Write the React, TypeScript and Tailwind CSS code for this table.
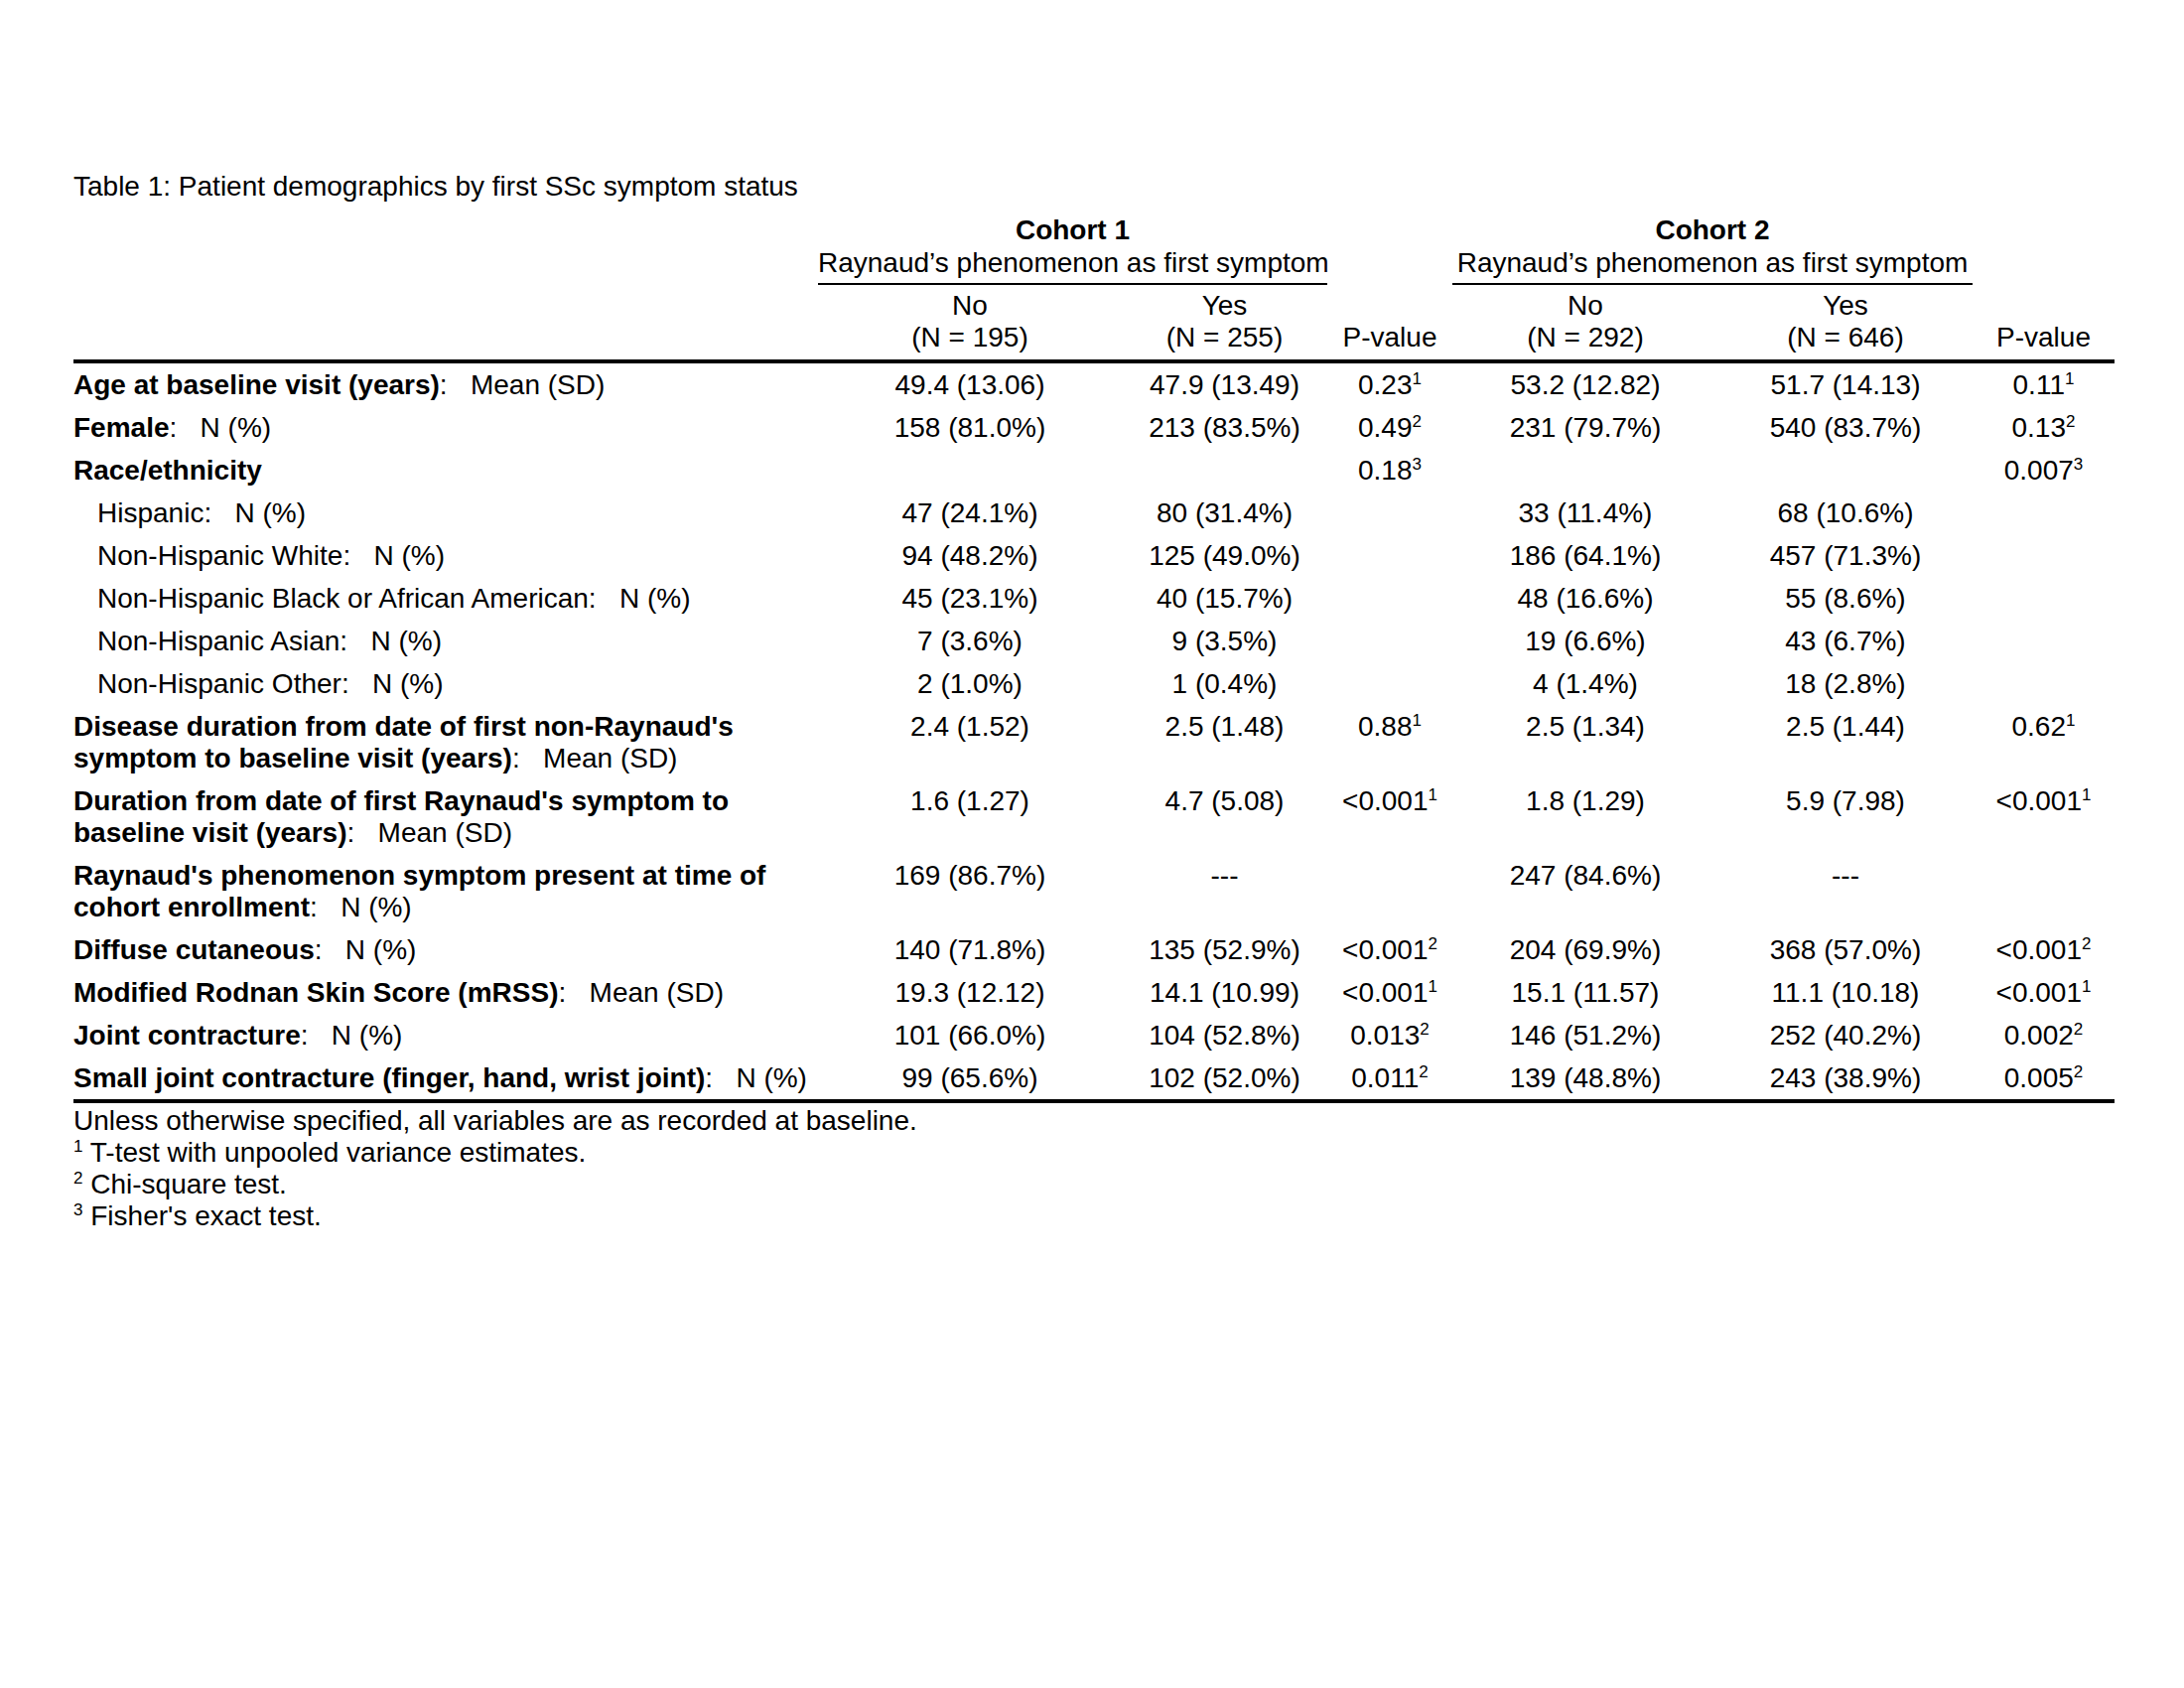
import React from "react";

type Cell = string | [string, string];
type Row = {
  bold?: string;
  bold2?: string;
  rest?: string;
  indent?: boolean;
  v: Cell[];
};

const rows: Row[] = [
  { bold: "Age at baseline visit (years)", rest: ":   Mean (SD)", v: ["49.4 (13.06)", "47.9 (13.49)", ["0.23", "1"], "53.2 (12.82)", "51.7 (14.13)", ["0.11", "1"]] },
  { bold: "Female", rest: ":   N (%)", v: ["158 (81.0%)", "213 (83.5%)", ["0.49", "2"], "231 (79.7%)", "540 (83.7%)", ["0.13", "2"]] },
  { bold: "Race/ethnicity", rest: "", v: ["", "", ["0.18", "3"], "", "", ["0.007", "3"]] },
  { indent: true, rest: "Hispanic:   N (%)", v: ["47 (24.1%)", "80 (31.4%)", "", "33 (11.4%)", "68 (10.6%)", ""] },
  { indent: true, rest: "Non-Hispanic White:   N (%)", v: ["94 (48.2%)", "125 (49.0%)", "", "186 (64.1%)", "457 (71.3%)", ""] },
  { indent: true, rest: "Non-Hispanic Black or African American:   N (%)", v: ["45 (23.1%)", "40 (15.7%)", "", "48 (16.6%)", "55 (8.6%)", ""] },
  { indent: true, rest: "Non-Hispanic Asian:   N (%)", v: ["7 (3.6%)", "9 (3.5%)", "", "19 (6.6%)", "43 (6.7%)", ""] },
  { indent: true, rest: "Non-Hispanic Other:   N (%)", v: ["2 (1.0%)", "1 (0.4%)", "", "4 (1.4%)", "18 (2.8%)", ""] },
  { bold: "Disease duration from date of first non-Raynaud's", bold2: "symptom to baseline visit (years)", rest: ":   Mean (SD)", v: ["2.4 (1.52)", "2.5 (1.48)", ["0.88", "1"], "2.5 (1.34)", "2.5 (1.44)", ["0.62", "1"]] },
  { bold: "Duration from date of first Raynaud's symptom to", bold2: "baseline visit (years)", rest: ":   Mean (SD)", v: ["1.6 (1.27)", "4.7 (5.08)", ["<0.001", "1"], "1.8 (1.29)", "5.9 (7.98)", ["<0.001", "1"]] },
  { bold: "Raynaud's phenomenon symptom present at time of", bold2: "cohort enrollment", rest: ":   N (%)", v: ["169 (86.7%)", "---", "", "247 (84.6%)", "---", ""] },
  { bold: "Diffuse cutaneous", rest: ":   N (%)", v: ["140 (71.8%)", "135 (52.9%)", ["<0.001", "2"], "204 (69.9%)", "368 (57.0%)", ["<0.001", "2"]] },
  { bold: "Modified Rodnan Skin Score (mRSS)", rest: ":   Mean (SD)", v: ["19.3 (12.12)", "14.1 (10.99)", ["<0.001", "1"], "15.1 (11.57)", "11.1 (10.18)", ["<0.001", "1"]] },
  { bold: "Joint contracture", rest: ":   N (%)", v: ["101 (66.0%)", "104 (52.8%)", ["0.013", "2"], "146 (51.2%)", "252 (40.2%)", ["0.002", "2"]] },
  { bold: "Small joint contracture (finger, hand, wrist joint)", rest: ":   N (%)", v: ["99 (65.6%)", "102 (52.0%)", ["0.011", "2"], "139 (48.8%)", "243 (38.9%)", ["0.005", "2"]] },
];

const GRID = "grid grid-cols-[750px_306px_207px_126px_268px_256px_143px]";

function Sup({ n }: { n: string }) {
  return <span className="relative -top-[10px] text-[17px] leading-none">{n}</span>;
}

function renderCell(c: Cell) {
  if (Array.isArray(c)) {
    return (
      <>
        {c[0]}
        <Sup n={c[1]} />
      </>
    );
  }
  return c;
}

export default function App() {
  return (
    <div className="min-h-[1700px] w-[2200px] bg-white text-black font-['Liberation_Sans',Arial,sans-serif] text-[28px] leading-[32px]">
      <div className="pl-[74px] pt-[172px]">
        <div>Table 1: Patient demographics by first SSc symptom status</div>
        <div className="mt-[11px] w-[2056px]">
          {/* Header */}
          <div className={`${GRID} border-b-4 border-black`}>
            <div className="col-start-2 col-span-2 row-start-1 border-b-2 border-black pb-[4px] text-center leading-[33px] whitespace-nowrap">
              <div className="font-bold">Cohort 1</div>
              <div>Raynaud’s phenomenon as first symptom</div>
            </div>
            <div className="col-start-5 col-span-2 row-start-1 border-b-2 border-black pb-[4px] text-center leading-[33px] whitespace-nowrap">
              <div className="font-bold">Cohort 2</div>
              <div>Raynaud’s phenomenon as first symptom</div>
            </div>
            <div className="col-start-2 row-start-2 pt-[5px] pb-[6px] text-center">
              <div>No</div>
              <div>(N = 195)</div>
            </div>
            <div className="col-start-3 row-start-2 pt-[5px] pb-[6px] text-center">
              <div>Yes</div>
              <div>(N = 255)</div>
            </div>
            <div className="col-start-4 row-start-2 flex items-end pb-[6px] justify-center">
              <div>P-value</div>
            </div>
            <div className="col-start-5 row-start-2 pt-[5px] pb-[6px] text-center">
              <div>No</div>
              <div>(N = 292)</div>
            </div>
            <div className="col-start-6 row-start-2 pt-[5px] pb-[6px] text-center">
              <div>Yes</div>
              <div>(N = 646)</div>
            </div>
            <div className="col-start-7 row-start-2 flex items-end pb-[6px] justify-center">
              <div>P-value</div>
            </div>
          </div>

          {/* Body */}
          <div className="border-b-4 border-black">
            {rows.map((r, i) => (
              <div key={i} className={`${GRID} pt-[6px] pb-[5px]`}>
                <div className={`whitespace-pre ${r.indent ? "pl-[24px]" : ""}`}>
                  {r.bold2 ? (
                    <>
                      <div className="font-bold">{r.bold}</div>
                      <div>
                        <span className="font-bold">{r.bold2}</span>
                        {r.rest}
                      </div>
                    </>
                  ) : (
                    <div>
                      {r.bold ? <span className="font-bold">{r.bold}</span> : null}
                      {r.rest}
                    </div>
                  )}
                </div>
                {r.v.map((c, j) => (
                  <div key={j} className="text-center whitespace-pre">
                    {renderCell(c)}
                  </div>
                ))}
              </div>
            ))}
          </div>

          {/* Footnotes */}
          <div className="pt-[2px]">
            <div>Unless otherwise specified, all variables are as recorded at baseline.</div>
            <div>
              <Sup n="1" /> T-test with unpooled variance estimates.
            </div>
            <div>
              <Sup n="2" /> Chi-square test.
            </div>
            <div>
              <Sup n="3" /> Fisher's exact test.
            </div>
          </div>
        </div>
      </div>
    </div>
  );
}
